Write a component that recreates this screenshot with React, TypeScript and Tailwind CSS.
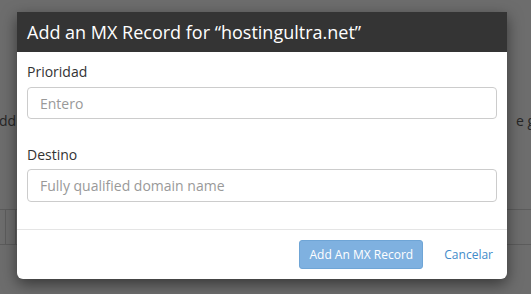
const fieldLabel = "block h-5 text-[14px] leading-5 text-[#333]";
const fieldInput =
  "block w-full rounded-[4px] border border-[#ccc] bg-white px-3 text-[14px] text-[#555] outline-none placeholder:text-[#999]";

export default function App() {
  return (
    <div
      className="relative h-[294px] w-[531px] overflow-hidden bg-[#6d6d6d]"
      style={{ fontFamily: '"Open Sans", "Liberation Sans", sans-serif' }}
    >
      {/* page under the backdrop */}
      <div className="flex flex-col text-[14px] text-[#262626]">
        <div className="mt-[111px] flex h-5 items-center justify-between leading-5">
          <span className="-ml-px">ddr</span>
          <span className="w-[15px] overflow-hidden whitespace-nowrap">
            e <span className="underline">g</span>
          </span>
        </div>
        <div className="mt-[78px] flex h-[36px] border-y border-[#5c5c5c]">
          <div className="w-[6px] border-r border-[#5c5c5c]" />
          <div className="w-[10px] border-r border-[#5c5c5c]" />
          <div className="flex items-center pl-[1px] font-semibold">C</div>
        </div>
      </div>

      {/* modal */}
      <div className="absolute left-[17px] top-[12px] flex w-[490px] flex-col overflow-hidden rounded-b-[6px] bg-white shadow-[0_5px_15px_rgba(0,0,0,0.5)]">
        <div className="flex h-10 items-center bg-[#343434] px-[10px]">
          <h4 className="text-[18px] leading-6 font-[500] text-white">
            Add an MX Record for “hostingultra.net”
          </h4>
        </div>

        <div className="flex flex-col px-[10px] pb-[27px] pt-[10px]">
          <label className={fieldLabel}>Prioridad</label>
          <input className={`${fieldInput} mt-[5px] h-8`} placeholder="Entero" />
          <label className={`${fieldLabel} mt-[26px]`}>Destino</label>
          <input
            className={`${fieldInput} mt-[4px] h-[33px]`}
            placeholder="Fully qualified domain name"
          />
        </div>

        <div className="flex h-[50px] items-center justify-end gap-[21px] border-t border-[#e5e5e5] pr-[14px]">
          <button className="h-[29px] w-[124px] rounded-[3px] border border-[#6fa5d6] bg-[#7fb1e0] text-[12px] text-white">
            Add An MX Record
          </button>
          <button className="text-[12px] text-[#428bca]">Cancelar</button>
        </div>
      </div>
    </div>
  );
}
